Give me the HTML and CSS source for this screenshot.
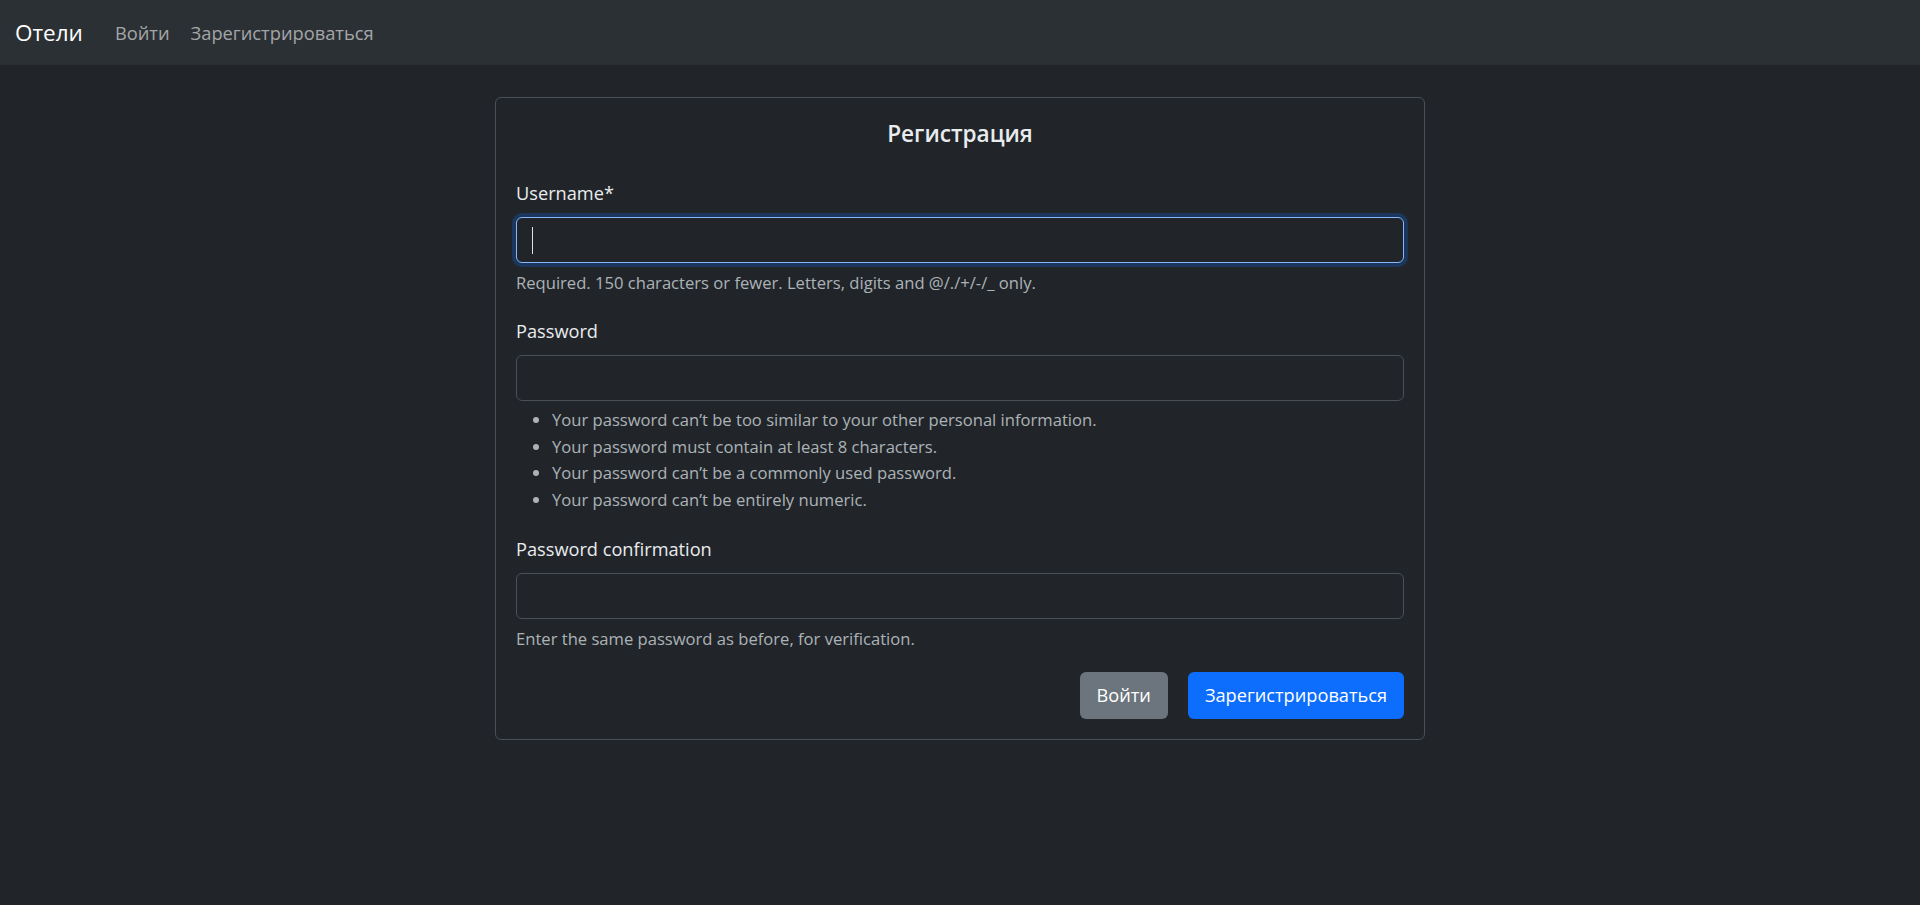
FILE: index.html
```html
<!DOCTYPE html>
<html lang="ru">
<head>
<meta charset="utf-8">
<title>Регистрация</title>
<link rel="stylesheet" href="styles.css">
</head>
<body>
<nav class="navbar">
  <a class="brand" href="#">Отели</a>
  <a class="nav-link first" href="#">Войти</a>
  <a class="nav-link second" href="#">Зарегистрироваться</a>
</nav>
<main class="main">
  <form class="card">
    <h4 class="card-title">Регистрация</h4>
    <div class="field">
      <label class="form-label" for="u">Username*</label>
      <div class="input-wrap caret">
        <input class="form-control focused" id="u" type="text">
      </div>
      <div class="form-text">Required. 150 characters or fewer. Letters, digits and @/./+/-/_ only.</div>
    </div>
    <div class="field">
      <label class="form-label" for="p1">Password</label>
      <input class="form-control" id="p1" type="password">
      <ul class="form-text help-list">
        <li>Your password can’t be too similar to your other personal information.</li>
        <li>Your password must contain at least 8 characters.</li>
        <li>Your password can’t be a commonly used password.</li>
        <li>Your password can’t be entirely numeric.</li>
      </ul>
    </div>
    <div class="field">
      <label class="form-label" for="p2">Password confirmation</label>
      <input class="form-control" id="p2" type="password">
      <div class="form-text">Enter the same password as before, for verification.</div>
    </div>
    <div class="actions">
      <a class="btn btn-secondary" href="#">Войти</a>
      <button class="btn btn-primary" type="button">Зарегистрироваться</button>
    </div>
  </form>
</main>
</body>
</html>
```
FILE: styles.css
```css
* { box-sizing: border-box; }
html, body { margin: 0; }
body {
  background: #212529;
  color: #dee2e6;
  font-family: "Open Sans", sans-serif;
  font-size: 16.6px;
  line-height: 1.5;
}
a { text-decoration: none; }
.navbar {
  height: 65px;
  background: #2b3035;
  display: flex;
  align-items: center;
  padding-left: 15px;
}
.brand { color: #fff; font-size: 22.5px; line-height: 30px; }
.nav-link { color: rgba(255,255,255,0.58); font-size: 18.3px; line-height: 26px; }
.nav-link.first { margin-left: 32px; }
.nav-link.second { margin-left: 21px; }
.main { padding-top: 32px; }
.card {
  width: 930px;
  margin: 0 auto;
  border: 1px solid #495057;
  border-radius: 6px;
  padding: 20px 20px 20px;
  display: flex;
  flex-direction: column;
}
.card-title {
  margin: 0 0 29px;
  text-align: center;
  font-size: 22.6px;
  font-weight: 600;
  line-height: 32px;
  color: #e9ecef;
}
.field { display: flex; flex-direction: column; margin-bottom: 21px; }
.form-label { font-size: 18.2px; line-height: 26px; margin-top: 1px; margin-bottom: 11px; color: #e9ecef; }
.input-wrap { position: relative; }
.form-control {
  display: block;
  width: 100%;
  height: 46px;
  background: #212529;
  border: 1px solid #495057;
  border-radius: 6px;
  color: #dee2e6;
  font: inherit;
  padding: 0 15px;
  outline: none;
}
.form-control.focused {
  border-color: #86b7fe;
  box-shadow: 0 0 0 4px rgba(13,110,253,0.25);
}
.caret::after {
  content: "";
  position: absolute;
  left: 16px;
  top: 10px;
  width: 1px;
  height: 27px;
  background: #dee2e6;
}
.form-text {
  margin-top: 7px;
  font-size: 16.6px;
  line-height: 26px;
  color: rgba(222,226,230,0.75);
}
.help-list { margin: 6px 0 0; padding-left: 36px; line-height: 26.67px; }
.actions { display: flex; justify-content: flex-end; gap: 20px; margin-top: -1px; }
.btn {
  height: 47px;
  display: inline-flex;
  align-items: center;
  justify-content: center;
  border: 0;
  border-radius: 6px;
  color: #fff;
  font: inherit;
  font-size: 18.2px;
  padding: 0 17px;
}
.btn-secondary { background: #6c757d; }
.btn-primary { background: #0d6efd; }
```
